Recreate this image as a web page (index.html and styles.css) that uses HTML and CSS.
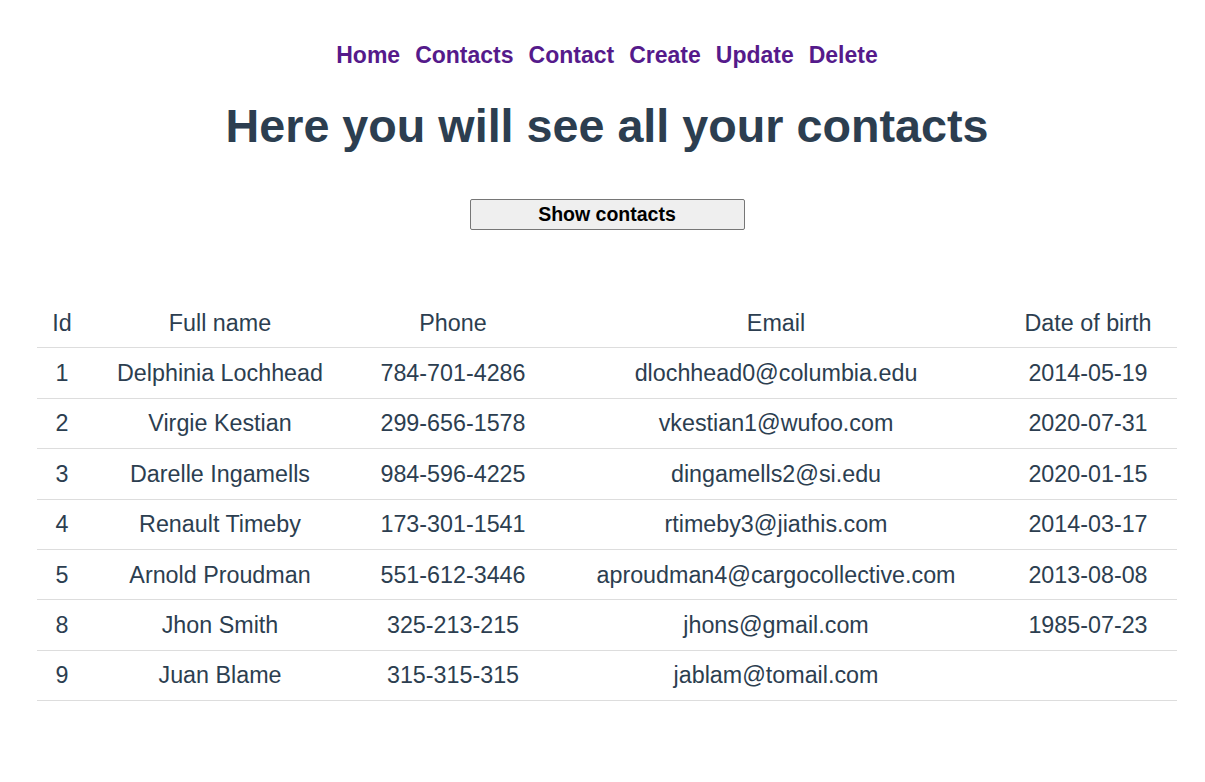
FILE: index.html
```html
<!DOCTYPE html>
<html lang="en">
<head>
<meta charset="utf-8">
<title>Contacts</title>
<link rel="stylesheet" href="styles.css">
</head>
<body>
<div class="app">
  <nav class="nav">
    <a href="#" class="nav-link">Home</a>
    <a href="#" class="nav-link">Contacts</a>
    <a href="#" class="nav-link">Contact</a>
    <a href="#" class="nav-link">Create</a>
    <a href="#" class="nav-link">Update</a>
    <a href="#" class="nav-link">Delete</a>
  </nav>
  <h1 class="title">Here you will see all your contacts</h1>
  <div class="actions">
    <button class="show-btn" type="button">Show contacts</button>
  </div>
  <div class="table-wrap">
    <table class="contacts">
      <colgroup>
        <col class="c-id"><col class="c-name"><col class="c-phone"><col class="c-email"><col class="c-date">
      </colgroup>
      <thead>
        <tr><th>Id</th><th>Full name</th><th>Phone</th><th>Email</th><th>Date of birth</th></tr>
      </thead>
      <tbody>
        <tr><td>1</td><td>Delphinia Lochhead</td><td>784-701-4286</td><td>dlochhead0@columbia.edu</td><td>2014-05-19</td></tr>
        <tr><td>2</td><td>Virgie Kestian</td><td>299-656-1578</td><td>vkestian1@wufoo.com</td><td>2020-07-31</td></tr>
        <tr><td>3</td><td>Darelle Ingamells</td><td>984-596-4225</td><td>dingamells2@si.edu</td><td>2020-01-15</td></tr>
        <tr><td>4</td><td>Renault Timeby</td><td>173-301-1541</td><td>rtimeby3@jiathis.com</td><td>2014-03-17</td></tr>
        <tr><td>5</td><td>Arnold Proudman</td><td>551-612-3446</td><td>aproudman4@cargocollective.com</td><td>2013-08-08</td></tr>
        <tr><td>8</td><td>Jhon Smith</td><td>325-213-215</td><td>jhons@gmail.com</td><td>1985-07-23</td></tr>
        <tr><td>9</td><td>Juan Blame</td><td>315-315-315</td><td>jablam@tomail.com</td><td></td></tr>
      </tbody>
    </table>
  </div>
</div>
</body>
</html>
```

FILE: styles.css
```css
html, body {
  margin: 0;
  padding: 0;
  background: #ffffff;
}

.app {
  font-family: "Liberation Sans", Arial, Helvetica, sans-serif;
  font-size: 23px;
  color: #2c3e50;
  text-align: center;
  padding: 42px 0 40px 9px;
}

.nav {
  display: flex;
  justify-content: center;
  gap: 15px;
  line-height: 26px;
  height: 26px;
}

.nav-link {
  font-weight: bold;
  color: #551a8b;
  text-decoration: none;
}

.title {
  font-size: 46.7px;
  font-weight: bold;
  line-height: 53px;
  margin: 32px 0 31px;
  color: #2c3e50;
}

.actions {
  padding-top: 15px;
  display: flex;
  justify-content: center;
}

.show-btn {
  width: 275px;
  height: 31px;
  box-sizing: border-box;
  padding: 0;
  font-family: "Liberation Sans", Arial, sans-serif;
  font-size: 19.5px;
  font-weight: bold;
  color: #000000;
  background: #efefef;
  border: 1px solid #767676;
  border-radius: 2px;
}

.table-wrap {
  padding: 68px 0 0 28px;
}

.contacts {
  width: 1140px;
  border-collapse: collapse;
  table-layout: fixed;
}

.c-id { width: 50px; }
.c-name { width: 266px; }
.c-phone { width: 200px; }
.c-email { width: 446px; }
.c-date { width: 178px; }

.contacts th,
.contacts td {
  font-weight: normal;
  font-size: 23.3px;
  line-height: 26.4px;
  padding: 11.5px 0;
  text-align: center;
  border-bottom: 1px solid #dddddd;
  white-space: nowrap;
  color: #2c3e50;
}
```
